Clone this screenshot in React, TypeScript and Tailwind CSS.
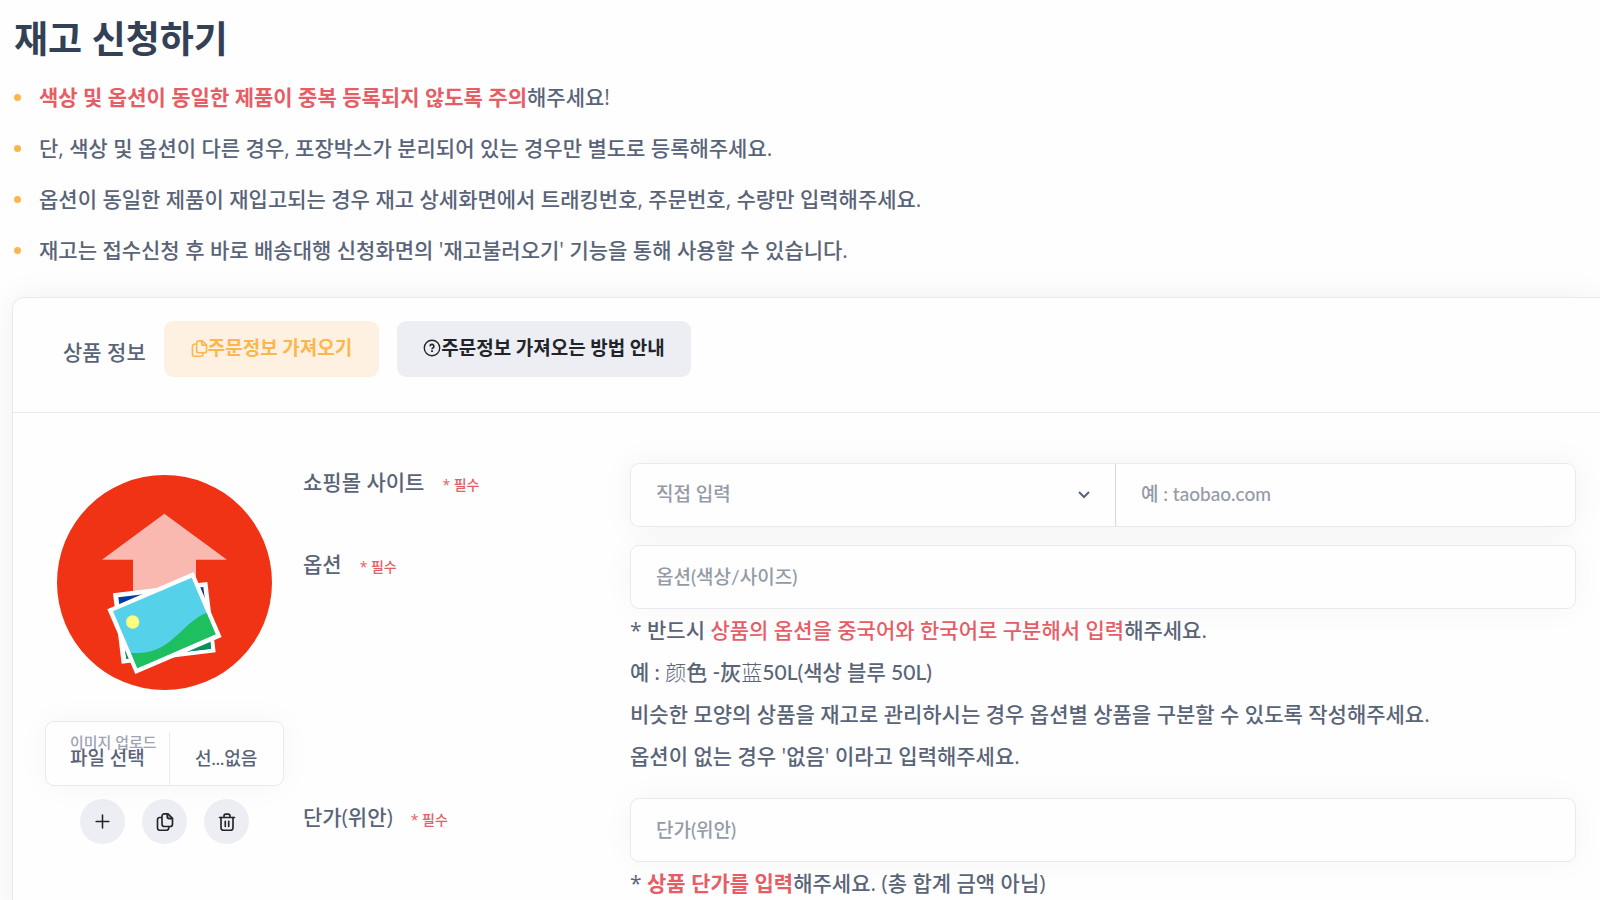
import type { ReactNode } from "react";

interface FieldRowProps {
  id: string;
  label: string;
  minHeight: string;
  children: ReactNode;
}

const notices: ReactNode[] = [
  <>
    <strong className="font-bold text-[#e75d66]">
      색상 및 옵션이 동일한 제품이 중복 등록되지 않도록 주의
    </strong>
    해주세요!
  </>,
  "단, 색상 및 옵션이 다른 경우, 포장박스가 분리되어 있는 경우만 별도로 등록해주세요.",
  "옵션이 동일한 제품이 재입고되는 경우 재고 상세화면에서 트래킹번호, 주문번호, 수량만 입력해주세요.",
  "재고는 접수신청 후 바로 배송대행 신청화면의 '재고불러오기' 기능을 통해 사용할 수 있습니다.",
];

const inputClass =
  "h-16 w-full rounded-[9px] border border-[#e9e9f2] bg-[#fefefe] px-[25px] pb-[2px] font-['Lato','Noto_Sans_CJK_KR',sans-serif] text-[19px] text-[#5a6478] shadow-[0_0_32px_rgba(0,0,0,0.04)] outline-none placeholder:text-[#949aa7] focus:border-[#fdb54e]";

const roundButtonClass =
  "flex size-[45px] items-center justify-center rounded-full bg-[#ededf4]";

function CopyIcon({ className }: { className: string }) {
  return (
    <svg viewBox="0 0 24 24" className={className} fill="none" stroke="currentColor" strokeWidth="2.2" strokeLinejoin="round" aria-hidden="true">
      <path d="M8 6H5a3 3 0 0 0-3 3v11a3 3 0 0 0 3 3h9a3 3 0 0 0 3-3v-2" />
      <path d="M11 1.200h5l6 6V15a3 3 0 0 1-3 3h-8a3 3 0 0 1-3-3V4.200a3 3 0 0 1 3-3z" />
      <path d="M15 1.500v3.500a2.500 2.500 0 0 0 2.500 2.500H22" />
      <path d="M16 2l5.500 5.500H18a2 2 0 0 1-2-2z" fill="currentColor" fillOpacity="0.35" stroke="none" />
    </svg>
  );
}

function HelpIcon({ className }: { className: string }) {
  return (
    <svg viewBox="0 0 24 24" className={className} fill="none" stroke="currentColor" strokeWidth="1.800" aria-hidden="true">
      <circle cx="12" cy="12" r="10.300" />
      <path d="M9.500 9.700a2.500 2.500 0 1 1 3.700 2.200c-.8.5-1.200.9-1.200 1.900" strokeWidth="2.200" />
      <path d="M12 15v2.200" strokeWidth="2.400" />
    </svg>
  );
}

function TrashIcon({ className }: { className: string }) {
  return (
    <svg viewBox="0 0 24 24" className={className} fill="none" stroke="currentColor" strokeWidth="2.200" strokeLinecap="round" strokeLinejoin="round" aria-hidden="true">
      <path d="M2 6h20M8 6V4a2.500 2.500 0 0 1 2.500-2.500h3A2.500 2.500 0 0 1 16 4v2" />
      <path d="M4 6v14a3 3 0 0 0 3 3h10a3 3 0 0 0 3-3V6M9.700 11v7M14.300 11v7" />
    </svg>
  );
}

function PlusIcon({ className }: { className: string }) {
  return (
    <svg viewBox="0 0 24 24" className={className} fill="none" stroke="currentColor" strokeWidth="2.200" strokeLinecap="round" aria-hidden="true">
      <path d="M12 3v18M3 12h18" />
    </svg>
  );
}

function UploadArt() {
  return (
    <svg viewBox="81 75 645 645" className="size-[215px]" role="img" aria-label="이미지 업로드">
      <circle cx="403.500" cy="397.500" r="322.500" fill="#ef3314" />
      <path d="M403 191 591 329H498V440H309V329H216Z" fill="#f9b8b0" />
      <path d="M249 430 532 396 557 607 275 641Z" fill="#fff" />
      <path d="M265 442 520 411 543 596 289 626Z" fill="#0739a2" />
      <path d="M285 600 541 570 543 596 289 626Z" fill="#05915b" />
      <path d="M232 478 491 366 575 561 316 672Z" fill="#fff" />
      <path d="M249 484 485 383 557 553 322 655Z" fill="#55d2ea" />
      <path d="M303 608C350 613 387 600 421 573C462 540 490 503 530 489L557 553L322 655Z" fill="#1dbf5e" />
      <circle cx="308" cy="516" r="20" fill="#ffff7f" />
    </svg>
  );
}

function FieldRow({ id, label, minHeight, children }: FieldRowProps) {
  return (
    <div className={`flex ${minHeight}`}>
      <div className="w-[327px] shrink-0 pt-[3px]">
        <label htmlFor={id} className="text-[21px] leading-8">
          {label}
        </label>
        <span className="ml-[18px] text-sm text-[#e75d66]">* 필수</span>
      </div>
      <div className="min-w-0 flex-1">{children}</div>
    </div>
  );
}

export default function App() {
  return (
    <main className="h-screen overflow-hidden bg-[#fefefe] pl-3 font-['Open_Sans','Noto_Sans_CJK_KR',sans-serif] font-medium text-[#5a6478]">
      <h1 className="pt-3 pl-[2px] text-[37px] leading-[54px] font-bold text-[#334155]">
        재고 신청하기
      </h1>

      <ul className="mt-[6px] text-[21px]">
        {notices.map((notice, i) => (
          <li key={i} className="flex h-[51px] items-center gap-[18px]">
            <span className="ml-[2px] size-[7px] shrink-0 rounded-full bg-[#fdb54e]" />
            <p>{notice}</p>
          </li>
        ))}
      </ul>

      <section className="mt-[21px] rounded-tl-[12px] border-t border-l border-[#e9e9f2] bg-[#fefefe] shadow-[0_0_32px_rgba(0,0,0,0.06)]">
        {/* 상품 정보 */}
        <header className="flex items-start gap-[18px] border-b border-[#e9e9f2] pt-[23px] pb-[35px] pl-[50px]">
          <h2 className="pt-[15px] text-[21px] leading-8">상품 정보</h2>
          <button
            type="button"
            className="flex h-14 items-center rounded-[9px] bg-[#fff1e2] px-[27px] pb-[2px] font-['Lato','Noto_Sans_CJK_KR',sans-serif] text-[19px] font-bold text-[#fdb54e]"
          >
            <CopyIcon className="size-[17px]" />
            주문정보 가져오기
          </button>
          <button
            type="button"
            className="flex h-14 items-center rounded-[9px] bg-[#ededf4] px-[26px] pb-[2px] font-['Lato','Noto_Sans_CJK_KR',sans-serif] text-[19px] font-bold text-[#212529]"
          >
            <HelpIcon className="size-[18px]" />
            주문정보 가져오는 방법 안내
          </button>
        </header>

        <form className="flex pt-[50px] pr-6 pl-8">
          {/* 이미지 */}
          <div className="mr-[19px] flex w-[239px] shrink-0 flex-col items-center pt-3">
            <UploadArt />
            <label
              htmlFor="image"
              className="relative mt-[31px] flex h-[65px] w-full cursor-pointer rounded-[9px] border border-[#e9e9f2] bg-[#fefefe] font-['Lato','Noto_Sans_CJK_KR',sans-serif] text-lg shadow-[0_0_32px_rgba(0,0,0,0.04)]"
            >
              <span className="absolute top-[10px] left-6 text-[15px] leading-5 text-[#9fa3b4]">
                이미지 업로드
              </span>
              <span className="relative mt-[10px] w-[124px] border-r border-[#e9e9f2] pt-3 pl-6 text-[19px] leading-7">
                파일 선택
              </span>
              <span className="mt-[22px] pl-[25px] leading-7">선...없음</span>
              <input id="image" type="file" className="sr-only" />
            </label>
            <div className="mt-[13px] flex gap-[17px] text-[#212529]">
              <button type="button" aria-label="추가" className={roundButtonClass}>
                <PlusIcon className="size-[17px]" />
              </button>
              <button type="button" aria-label="복사" className={roundButtonClass}>
                <CopyIcon className="size-[18px]" />
              </button>
              <button type="button" aria-label="삭제" className={roundButtonClass}>
                <TrashIcon className="size-[18px]" />
              </button>
            </div>
          </div>

          <div className="min-w-0 flex-1">
            <FieldRow id="site" label="쇼핑몰 사이트" minHeight="min-h-[82px]">
              <div className="flex rounded-[9px] shadow-[0_0_32px_rgba(0,0,0,0.05)]">
                <div className="relative w-[486px] shrink-0">
                  <select
                    id="site"
                    className="h-16 w-full appearance-none rounded-l-[9px] border border-r-[#d4d7e1] border-[#e9e9f2] bg-[#fefefe] px-[25px] pb-[2px] font-['Lato','Noto_Sans_CJK_KR',sans-serif] text-[19px] text-[#949aa7] outline-none"
                  >
                    <option>직접 입력</option>
                  </select>
                  <svg
                    viewBox="0 0 12 8"
                    className="pointer-events-none absolute top-7 right-[26px] h-2 w-3"
                    fill="none"
                    stroke="currentColor"
                    strokeWidth="2"
                    aria-hidden="true"
                  >
                    <path d="M1 1l5 5 5-5" />
                  </svg>
                </div>
                <input
                  aria-label="쇼핑몰 사이트 주소"
                  placeholder="예 : taobao.com"
                  className="h-16 min-w-0 flex-1 rounded-r-[9px] border border-l-0 border-[#e9e9f2] bg-[#fefefe] px-[25px] pb-[3px] font-['Lato','Noto_Sans_CJK_KR',sans-serif] text-[19px] outline-none placeholder:text-[#949aa7]"
                />
              </div>
            </FieldRow>

            <FieldRow id="option" label="옵션" minHeight="min-h-[253px]">
              <input id="option" placeholder="옵션(색상/사이즈)" className={inputClass} />
              <div className="text-[21px] leading-[42px]">
                <p>
                  * 반드시{" "}
                  <span className="text-[#e75d66]">
                    상품의 옵션을 중국어와 한국어로 구분해서 입력
                  </span>
                  해주세요.
                </p>
                <p className="font-['Lato','Noto_Sans_CJK_KR',sans-serif]">
                  예 : <span className="font-light">颜</span>色 -灰
                  <span className="font-light">蓝</span>50L(색상 블루 50L)
                </p>
                <p>
                  비슷한 모양의 상품을 재고로 관리하시는 경우 옵션별 상품을 구분할 수
                  있도록 작성해주세요.
                </p>
                <p>옵션이 없는 경우 '없음' 이라고 입력해주세요.</p>
              </div>
            </FieldRow>

            <FieldRow id="price" label="단가(위안)" minHeight="min-h-[120px]">
              <input id="price" placeholder="단가(위안)" className={inputClass} />
              <p className="text-[21px] leading-[42px]">
                * <strong className="font-bold text-[#e75d66]">상품 단가를 입력</strong>
                해주세요. (총 합계 금액 아님)
              </p>
            </FieldRow>
          </div>
        </form>
      </section>
    </main>
  );
}
